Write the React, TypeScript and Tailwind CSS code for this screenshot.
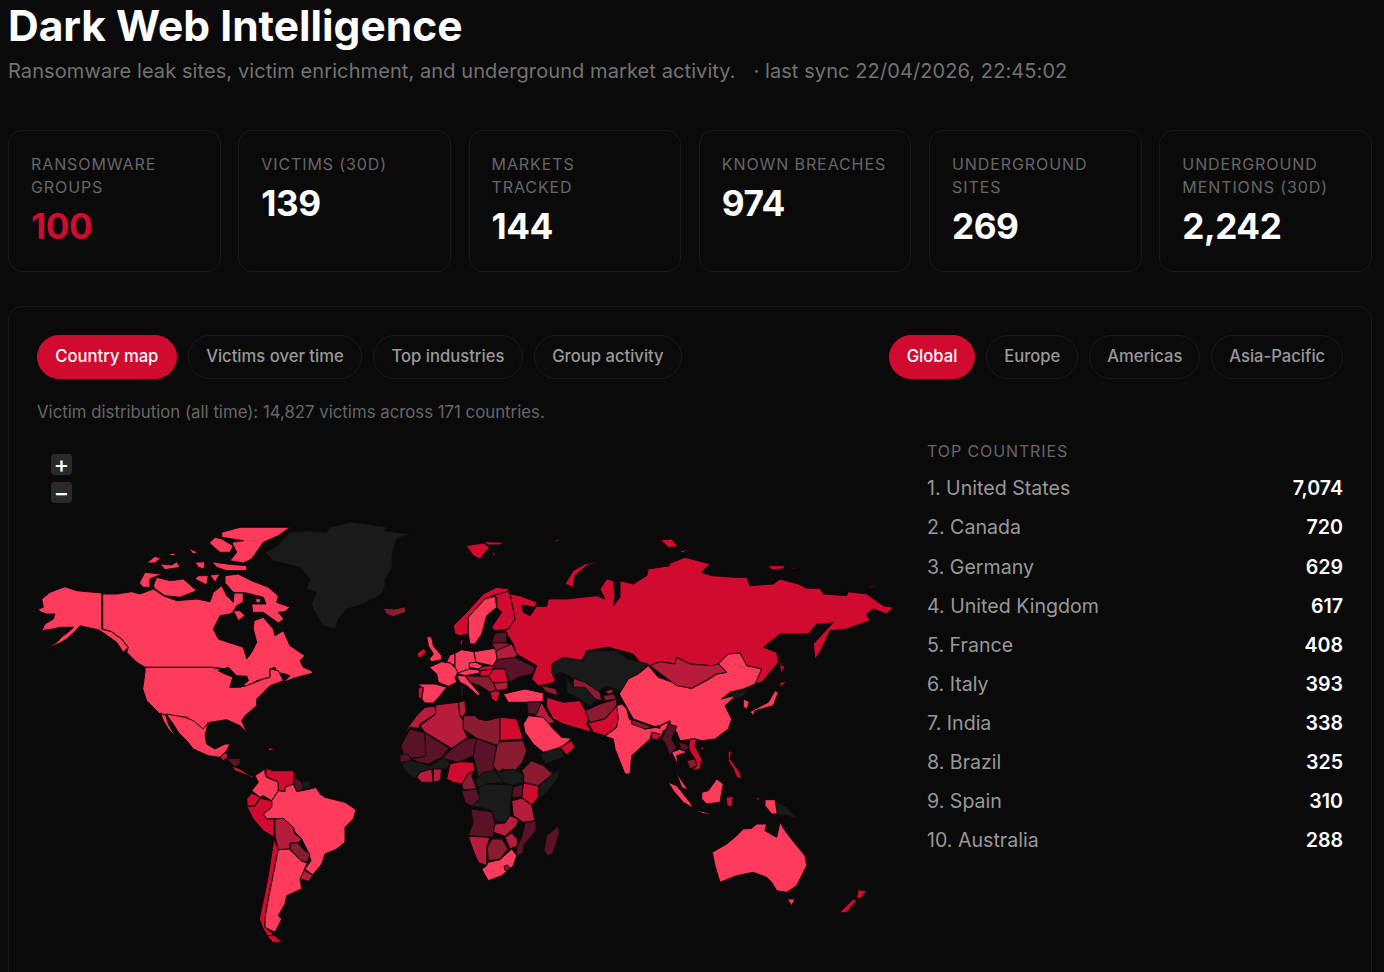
import React from "react";

const Z: Record<string, [number, number]> = {
  A: [30, 440], S: [230, 720], E: [400, 520], F: [640, 520], O: [640, 740], N: [395, 670], I: [530, 650], M: [140, 670],
};
const B = "#ff3b5c", R = "#d10b2f", C = "#b81c3c", D = "#8a1c32", K = "#5a1226", X = "#1a1a1a", H = "#0a0a0a";

function pts(segs: [string, string][]) {
  return segs
    .map(([k, s]) => {
      const [ox, oy] = Z[k];
      const n = s.match(/-?\d+(\.\d+)?/g)!.map(Number);
      const out: string[] = [];
      for (let i = 0; i < n.length; i += 2) out.push(`${(ox + n[i] / 3).toFixed(1)},${(oy + n[i + 1] / 3).toFixed(1)}`);
      return out.join(" ");
    })
    .join(" ");
}

const SHAPES: [string, [string, string][]][] = [
  // Greenland
  [X, [["A", "705 340 745 318 760 300 780 280 830 275 890 280 900 265 960 250 1010 255 1070 265 1060 275 1135 285 1100 300 1090 330 1085 355 1085 390 1065 420 1065 440 1055 465 1000 495 950 510 925 540 915 570 880 560 850 510 845 495 860 460 830 450 840 420 810 385 730 365"]]],
  // Alaska
  [B, [["A", "25 510 40 505 35 480 60 460 105 443 140 455 215 462 215 570 245 578 275 600 295 625 280 640 260 610 225 585 205 572 170 565 150 560 135 578 110 600 90 612 50 628 80 610 100 590 120 575 130 565 90 565 70 570 35 575 45 555 70 540 75 525 50 525 30 518"]]],
  // Canada
  [B, [["A", "218 465 260 465 305 458 330 465 370 450 400 470 440 485 500 480 540 488 550 460 575 440 590 470 610 490 612 462 640 462 640 490 620 500 610 518 600 525 570 530 550 570 565 600 640 625 650 660 665 640 680 610 670 570 672 545 700 535 730 570 735 590 760 575 780 620 825 650 810 665 820 685 845 695 848 703 800 715 760 730 780 710 765 705 740 700 735 685 720 690 720 715 680 725 650 745 640 735 655 725 650 712 620 710 590 690 550 685 345 685 320 670 290 640 295 625 275 600 245 578 218 570"]]],
  // USA
  [B, [["A", "345 685 545 685 590 695 610 710 600 745 625 745 650 740 700 720 720 715 720 690 745 695 760 725 720 740 695 765 680 780 680 800 645 830 635 845 650 880 630 860 590 842 540 850 525 875 495 855 470 835 420 830 390 825 350 785 338 750 345 700"]]],
  // Arctic islands
  [B, [["A", "575 280 630 265 780 265 745 290 700 310 665 360 640 372 600 365 620 340 605 310 640 305 575 295"]]],
  [B, [["A", "538 312 555 295 575 300 610 320 600 340 570 340"]]],
  [B, [["A", "350 372 375 352 392 358 375 372"]]],
  [B, [["A", "390 375 425 378 440 368 450 385 405 392"]]],
  [B, [["A", "475 328 505 340 490 345"]]],
  [B, [["A", "418 345 435 342 436 350 420 350"]]],
  [B, [["A", "328 432 345 400 395 405 360 420 360 445 340 445"]]],
  [B, [["A", "370 440 380 415 420 425 460 420 500 455 450 475 405 470 375 450"]]],
  [B, [["A", "495 370 525 368 522 390 505 385"]]],
  [B, [["A", "545 368 590 375 650 380 650 395 590 395 560 385"]]],
  [B, [["A", "505 410 535 410 530 438 495 420"]]],
  [B, [["A", "540 408 570 405 555 430"]]],
  [B, [["A", "585 410 625 405 665 425 715 445 745 470 740 490 780 505 765 518 745 520 762 540 745 552 700 520 668 520 665 495 708 495 700 475 650 462 610 460 585 432"]]],
  [B, [["A", "610 515 630 515 645 530 625 545"]]],
  [B, [["A", "675 480 690 478 692 490 680 492"]]],
  // Great lakes
  [H, [["A", "565 695 595 685 620 710 600 745 610 715 585 705"]]],
  [H, [["A", "630 745 655 725 650 712 625 715 635 730"]]],
  // Iceland
  [D, [["A", "1060 508 1095 510 1125 503 1128 520 1090 533 1070 525"]]],
  // Mexico
  [B, [["M", "80 135 135 145 160 155 190 180 205 160 195 200 200 225 225 240 255 225 270 225 260 245 240 265 205 260 160 240 140 215 115 190 100 165 85 145"]]],
  [B, [["M", "62 132 78 140 85 165 108 205 85 180 70 155"]]],
  [C, [["M", "240 265 258 248 265 265 250 275"]]],
  [K, [["M", "262 268 300 268 300 285 285 295 265 275"]]],
  [C, [["M", "275 290 300 300 330 320 345 320 335 325 310 315 285 305"]]],
  [H, [["M", "300 210 340 225 360 230 330 222"]]],
  [R, [["M", "385 235 410 243 385 245"]]],
  // South America
  [B, [["S", "105 150 105 165 110 175 145 190 145 215 125 245 100 230 90 235 65 215 85 190 75 170"]]],
  [R, [["S", "108 148 130 155 190 155 195 170 190 195 165 205 165 218 145 215 145 190 108 172"]]],
  [K, [["S", "190 170 215 190 220 210 200 218 192 195"]]],
  [X, [["S", "215 190 240 185 240 205 220 210"]]],
  [B, [["S", "165 205 190 195 200 218 240 210 258 205 270 225 285 235 345 250 378 272 370 300 345 325 345 370 320 390 285 405 275 435 248 468 225 450 243 425 235 400 215 360 195 340 190 325 135 298 110 300 100 285 125 265 125 245 145 215 165 218"]]],
  [R, [["S", "65 222 90 235 75 260 52 262 50 240"]]],
  [R, [["S", "50 262 75 262 90 238 125 245 125 265 100 285 110 300 132 300 132 355 100 335 70 300"]]],
  [C, [["S", "135 300 160 298 190 325 195 345 215 360 205 372 180 372 178 390 145 392 135 350"]]],
  [D, [["S", "182 372 205 372 218 390 240 405 232 430 212 425 180 390"]]],
  [C, [["S", "218 452 248 468 238 487 210 480"]]],
  [R, [["S", "132 360 145 392 125 490 115 540 105 600 105 625 130 645 115 655 100 630 88 600 100 545 115 470"]]],
  [B, [["S", "145 392 178 390 212 425 232 432 210 480 215 510 170 530 165 555 145 590 155 600 135 640 105 625 105 600 115 540 125 490"]]],
  [R, [["S", "110 650 135 650 155 668 130 672"]]],
  // Africa north
  [C, [["N", "120 112 122 135 75 165 72 178 45 175 20 205 40 175 65 140 90 115"]]],
  [C, [["N", "122 108 190 100 195 140 205 155 205 180 218 205 170 238 90 190 75 170 122 135"]]],
  [C, [["N", "190 100 210 95 212 130 205 145 195 140"]]],
  [D, [["N", "205 140 240 140 250 150 275 155 315 145 315 232 245 208 205 180"]]],
  [R, [["N", "315 145 365 150 385 210 315 215"]]],
  [K, [["N", "18 230 45 180 90 192 92 262 50 268 25 255"]]],
  [K, [["N", "90 192 162 238 140 265 100 285 70 280 50 270 92 262"]]],
  [K, [["N", "245 208 235 260 190 280 140 268 170 240 218 208"]]],
  [K, [["N", "245 208 305 232 295 290 298 305 250 322 235 260"]]],
  [D, [["N", "315 218 385 215 395 245 382 280 360 305 322 300 310 310 295 290 305 232"]]],
  // West Africa
  [K, [["S", "510 108 535 105 545 125 510 130"]]],
  [X, [["S", "512 132 545 125 600 140 640 115 660 130 650 150 635 150 610 152 570 158 555 178 530 160"]]],
  [C, [["S", "570 160 605 150 610 190 575 190 560 175"]]],
  [C, [["S", "610 150 635 150 630 185 610 190"]]],
  [R, [["S", "660 135 690 128 730 130 735 155 715 165 695 195 670 190 650 180"]]],
  [D, [["S", "735 155 725 170 740 210 700 212 695 195 715 165"]]],
  [K, [["S", "695 215 740 210 750 240 725 262 705 250"]]],
  [X, [["S", "735 185 760 160 795 155 820 190 770 195 745 205"]]],
  [X, [["S", "800 160 850 150 880 165 880 190 845 200 820 190"]]],
  [D, [["S", "875 155 905 125 940 140 968 165 925 200 880 190 882 170"]]],
  [X, [["S", "925 205 970 165 990 150 985 175 955 215 925 240"]]],
  [R, [["S", "880 192 925 200 925 235 905 258 875 235"]]],
  [X, [["S", "745 205 770 195 845 198 850 205 840 250 840 290 825 310 795 305 785 275 750 265 725 262 750 240"]]],
  [K, [["S", "850 205 880 195 875 235 845 235"]]],
  [C, [["S", "845 245 875 238 905 258 915 305 880 310 850 290"]]],
  [K, [["S", "722 270 785 278 795 310 790 355 715 350 730 310"]]],
  [C, [["S", "795 315 825 312 840 290 865 300 860 320 825 352 790 340"]]],
  [K, [["S", "885 312 918 305 918 335 880 380 880 400 858 415 860 385 875 355"]]],
  [C, [["S", "825 355 845 342 862 360 862 380 840 390"]]],
  [C, [["S", "715 352 780 355 770 385 770 440 745 430 730 395"]]],
  [D, [["S", "785 360 815 360 835 390 810 420 775 425 772 385"]]],
  [B, [["S", "775 430 810 422 845 390 860 410 850 440 815 470 775 485 755 450 768 442"]]],
  [D, [["S", "822 442 832 438 840 446 832 456 824 452"]]],
  [K, [["S", "985 320 988 345 968 405 950 410 942 390 950 350"]]],
  // Russia
  [R, [
    ["E", "330 225 360 230 410 250 405 265 365 258 370 280 390 290 410 262 440 262 445 240 480 240 500 240 545 235 590 230 615 240 600 210 620 180 640 185 645 230 640 260 660 235 660 185 700 195 740 170 745 150 810 140"],
    ["F", "85 135 135 115 210 135 185 160 215 170 285 175 320 175 330 200 400 195 420 180 475 195 500 208 540 208 550 225 620 230 625 218 680 225 730 260 760 265 740 285 700 270 680 285 690 305 620 330 570 335 540 400 525 420 520 375 580 310 560 315 530 315 505 345 420 345 370 385 410 400 415 430 365 490 345 495 365 450 320 440 300 402 265 405 235 435 215 440 150 435 110 415 105 435 60 428 30 440 0 430"],
    ["E", "700 405 625 385 560 395 545 425 460 430 455 460 470 485 445 495 415 500 395 480 410 440 350 405 340 375 315 335 325 330 345 300 335 250"],
  ]],
  // Russian islands
  [R, [["E", "610 125 560 140 525 170 520 205 495 195 520 155 555 135"]]],
  [R, [["E", "460 65 485 60 470 68"]]],
  [R, [["E", "782 62 815 60 835 85 805 85"]]],
  [R, [["E", "840 95 870 92 845 102"]]],
  [R, [["F", "385 140 435 140 430 150 395 152"]]],
  [R, [["F", "450 145 475 150 455 150"]]],
  [R, [["F", "685 203 705 200 695 206"]]],
  [R, [["F", "420 405 425 440 435 440 422 465 420 440"]]],
  // Svalbard
  [R, [["E", "198 80 250 72 268 85 240 120 220 110"]]],
  [R, [["E", "250 68 310 70 300 78 265 78"]]],
  [R, [["E", "275 100 290 105 280 110"]]],
  // Nordics
  [R, [["E", "275 230 320 215 330 225 345 300 325 330 285 335 275 325 305 280 290 265 290 235"]]],
  [R, [["E", "160 320 200 280 250 225 290 205 330 210 320 218 285 228 255 240 205 295 205 345 180 350 165 345"]]],
  [B, [["E", "205 295 255 240 285 232 290 265 260 290 245 345 225 375 210 375 205 345"]]],
  [R, [["E", "180 365 190 360 185 385"]]],
  // West Europe
  [B, [["E", "80 352 95 355 100 380 125 410 125 422 95 428 88 420 100 405 85 380"]]],
  [R, [["E", "52 402 72 388 78 400 65 415 52 415"]]],
  [B, [["E", "88 445 125 428 150 432 165 445 175 460 165 475 170 490 145 502 115 490 110 465"]]],
  [B, [["E", "55 495 105 495 140 505 120 530 100 552 75 552 65 540 70 510"]]],
  [R, [["E", "55 505 70 505 65 540 55 535"]]],
  [B, [["E", "140 428 150 408 165 403 165 440 150 432"]]],
  [B, [["E", "165 403 185 392 222 398 228 430 208 445 210 455 175 462 165 445"]]],
  [B, [["E", "222 398 285 388 292 420 278 440 228 430"]]],
  [K, [["E", "285 342 320 340 320 372 275 372"]]],
  [D, [["E", "275 372 320 372 335 378 288 395"]]],
  [C, [["E", "288 395 335 375 352 408 345 415 292 422"]]],
  [K, [["E", "280 440 292 422 345 415 405 445 395 465 355 475 330 490 322 470 315 450 282 450"]]],
  [R, [["E", "265 472 280 450 315 450 325 490 280 492"]]],
  [C, [["E", "280 492 325 490 322 510 290 515"]]],
  [B, [["E", "208 432 228 430 250 442 235 450 208 445"]]],
  [R, [["E", "235 450 250 442 280 440 280 450 240 455"]]],
  [B, [["E", "170 463 208 450 235 452 240 462 195 470"]]],
  [R, [["E", "240 455 280 450 265 472 240 472"]]],
  [B, [["E", "170 470 195 470 210 490 240 525 235 530 200 500 180 490"]]],
  [B, [["E", "184 500 188 500 188 530 184 530"]]],
  [D, [["E", "195 470 240 472 265 472 280 492 290 515 270 520 240 500 210 490"]]],
  [R, [["E", "270 520 290 515 300 520 290 550 275 540"]]],
  // Caucasus
  [D, [["E", "420 498 470 510 475 530 440 520"]]],
  // Middle East
  [B, [["N", "325 75 390 60 445 72 445 97 395 100 340 100"]]],
  [C, [["N", "440 100 462 140 480 160 460 165 425 140 420 135"]]],
  [K, [["N", "395 100 440 98 425 135 400 135"]]],
  [B, [["N", "385 165 400 140 445 145 470 175 500 205 530 208 500 235 445 250 415 225 390 190"]]],
  [X, [["N", "435 255 495 235 510 262 450 285"]]],
  [R, [["N", "530 215 540 235 515 258 495 235"]]],
  [R, [["I", "50 145 100 160 150 155 175 200 170 225 185 250 150 240 100 225 70 210 50 175"]]],
  [X, [["I", "65 45 100 25 160 35 175 5 260 5 290 30 355 45 325 75 295 90 280 130 230 110 200 130 130 90 115 80 100 72 70 85"]]],
  [H, [["I", "75 75 95 70 108 90 105 150 85 140 75 110"]]],
  [X, [["I", "110 85 130 115 170 115 205 150 180 170 130 140 110 130"]]],
  [D, [["I", "130 88 165 100 210 130 215 155 195 150 165 115 130 115"]]],
  [C, [["I", "225 128 245 120 250 130 235 135"]]],
  [D, [["I", "220 140 250 135 260 150 225 155"]]],
  [D, [["I", "165 185 210 165 260 150 260 170 225 210 180 220"]]],
  [R, [["I", "175 222 225 210 260 170 295 180 265 205 260 235 225 260 190 250"]]],
  // China
  [B, [
    ["I", "268 135 295 90 325 75 355 50 385 85 480 118"],
    ["F", "155 508 205 482 230 465 260 460 235 435 265 405 300 402 320 440 365 450 345 495 310 510 270 520 245 540 280 530 300 520 255 560 275 600 265 630 225 660 185 665 165 660 120 665 110 640 90 615"],
    ["I", "420 215 380 235 310 210 290 175"],
  ]],
  [C, [["F", "30 440 60 428 105 435 110 415 150 435 215 440 235 435 260 460 230 465 205 480 155 508 110 500 70 470"]]],
  // South Asia
  [B, [["I", "260 170 275 165 290 180 298 210 345 240 380 235 415 220 425 235 400 245 390 270 365 250 360 270 305 320 300 375 285 375 255 300 250 270 225 262 260 235 265 205"]]],
  [D, [["I", "305 212 350 228 368 235 345 240 305 225"]]],
  [X, [["I", "368 233 390 230 390 238"]]],
  [R, [["I", "365 250 390 255 385 272 365 270"]]],
  [K, [["I", "415 225 440 232 425 270 440 295 420 320 405 280 395 270"]]],
  [R, [["I", "480 270 500 270 495 290 515 330 510 360 485 365 500 350 495 330 475 300"]]],
  [B, [["I", "425 310 450 300 470 310 440 320 445 350 430 320"]]],
  [K, [["I", "445 280 470 285 480 300 455 305"]]],
  [D, [["I", "470 335 495 330 500 350 480 360"]]],
  // East Asia
  [R, [["F", "420 490 440 488 420 505"]]],
  [B, [["F", "405 515 415 520 400 560 345 575 340 590 330 578 385 550"]]],
  [B, [["F", "310 540 328 548 322 570 310 565"]]],
  [X, [["F", "270 520 300 520 330 505 310 530 285 540"]]],
  [R, [["F", "268 695 276 695 270 720 264 715"]]],
  [B, [["F", "185 682 192 690 182 692"]]],
  // Indonesia / Oceania
  [B, [["O", "108 100 125 125 145 155 125 145"]]],
  [B, [["O", "85 130 110 140 150 190 160 208 130 190 100 155"]]],
  [B, [["O", "160 212 190 218 225 228 190 224"]]],
  [B, [["O", "185 160 205 155 230 120 250 135 245 160 240 190 200 195 185 180"]]],
  [R, [["O", "258 175 280 172 275 205 262 200"]]],
  [R, [["O", "265 40 275 35 270 60 300 100 305 120 290 115 280 90 265 65"]]],
  [R, [["O", "345 175 360 178 355 185"]]],
  [B, [["O", "375 182 405 182 412 225 395 225 375 200"]]],
  [X, [["O", "412 190 440 205 475 240 440 230 415 230"]]],
  [B, [["O", "217 340 260 315 290 290 310 270 335 268 350 255 380 255 375 275 410 295 420 250 435 275 450 295 470 320 495 350 500 380 485 410 470 440 440 460 410 455 395 430 380 415 340 400 290 410 240 430 225 380"]]],
  [B, [["O", "442 480 465 480 455 500"]]],
  [R, [["O", "598 522 640 480 650 485 620 520"]]],
  [R, [["O", "645 430 655 452 680 455 660 480 650 475 655 452"]]],
];

function WorldMap() {
  return (
    <svg viewBox="37 440 862 520" className="block w-full h-[520px]">
      {SHAPES.map(([c, segs], i) => (
        <polygon key={i} points={pts(segs)} fill={c} stroke={c === X ? "#0e0e0e" : "#14090c"} strokeWidth={1} strokeLinejoin="round" />
      ))}
    </svg>
  );
}

const STATS = [
  ["Ransomware groups", "100", true],
  ["Victims (30d)", "139", false],
  ["Markets tracked", "144", false],
  ["Known breaches", "974", false],
  ["Underground sites", "269", false],
  ["Underground mentions (30d)", "2,242", false],
] as const;

const TOP = [
  ["1. United States", "7,074"], ["2. Canada", "720"], ["3. Germany", "629"], ["4. United Kingdom", "617"], ["5. France", "408"],
  ["6. Italy", "393"], ["7. India", "338"], ["8. Brazil", "325"], ["9. Spain", "310"], ["10. Australia", "288"],
];

function Pill({ label, active, narrow }: { label: string; active?: boolean; narrow?: boolean }) {
  const base = "h-[44px] rounded-full pb-[1px] text-[16.64px] font-medium border";
  const pad = narrow ? "px-[16.8px]" : "px-[17.3px]";
  const tone = active ? "text-white bg-[#d10b2f] border-[#d10b2f]" : "text-[#999999] border-[#1a1a1a]";
  return <button className={`${base} ${pad} ${tone}`}>{label}</button>;
}

export default function App() {
  return (
    <div className="h-screen overflow-hidden bg-[#0a0a0a] pl-[8px] pr-[12px] font-['Inter',sans-serif]">
      <h1 className="text-[42.5px] leading-[52px] font-bold text-white">Dark Web Intelligence</h1>
      <p className="mt-[5px] text-[20px] leading-[28px] text-[#737373] tracking-[0.09px]">
        Ransomware leak sites, victim enrichment, and underground market activity. <span className="ml-[12px]">· last sync 22/04/2026, 22:45:02</span>
      </p>
      <div className="mt-[45px] grid grid-cols-6 gap-[17.6px]">
        {STATS.map(([l, v, red]) => (
          <div key={l} className="h-[142px] rounded-[14px] border border-[#1a1a1a] px-[22px] pt-[22px]">
            <div className="text-[16px] leading-[23px] uppercase tracking-[0.9px] text-[#666666]">{l}</div>
            <div className={red ? "mt-[4px] text-[35.2px] leading-[46px] font-bold tracking-[-0.5px] text-[#d10b2f]" : "mt-[4px] text-[35.2px] leading-[46px] font-bold tracking-[-0.5px] text-white"}>{v}</div>
          </div>
        ))}
      </div>
      <div className="mt-[34px] h-[800px] rounded-[14px] border border-[#1a1a1a] px-[28px] pt-[28px]">
        <div className="flex justify-between">
          <div className="flex gap-[11.2px]">
            <Pill label="Country map" active />
            <Pill label="Victims over time" />
            <Pill label="Top industries" />
            <Pill label="Group activity" />
          </div>
          <div className="flex gap-[11.2px]">
            <Pill label="Global" active narrow />
            <Pill label="Europe" narrow />
            <Pill label="Americas" narrow />
            <Pill label="Asia-Pacific" narrow />
          </div>
        </div>
        <p className="mt-[21px] text-[16.8px] leading-[24px] text-[#666666]">Victim distribution (all time): 14,827 victims across 171 countries.</p>
        <div className="mt-[15px] grid grid-cols-[862px_416px] gap-[28px]">
          <div className="relative">
            <WorldMap />
            <div className="absolute left-[14px] top-[15px] flex flex-col gap-[7px]">
              <div className="flex h-[21px] w-[21px] items-center justify-center rounded-[4px] bg-[#2a2a2a] pt-[1px] text-[23px] font-medium leading-none text-white">+</div>
              <div className="flex h-[21px] w-[21px] items-center justify-center rounded-[4px] bg-[#2a2a2a] pt-[1px] text-[23px] font-medium leading-none text-white">−</div>
            </div>
          </div>
          <div>
            <div className="mt-[2px] text-[16px] leading-[20px] uppercase tracking-[0.9px] text-[#666666]">Top countries</div>
            <div className="mt-[8.5px]">
              {TOP.map(([n, v]) => (
                <div key={n} className="flex h-[39.1px] items-center justify-between text-[19.6px]">
                  <span className="text-[#999999]">{n}</span>
                  <span className="font-semibold text-white">{v}</span>
                </div>
              ))}
            </div>
          </div>
        </div>
      </div>
    </div>
  );
}
